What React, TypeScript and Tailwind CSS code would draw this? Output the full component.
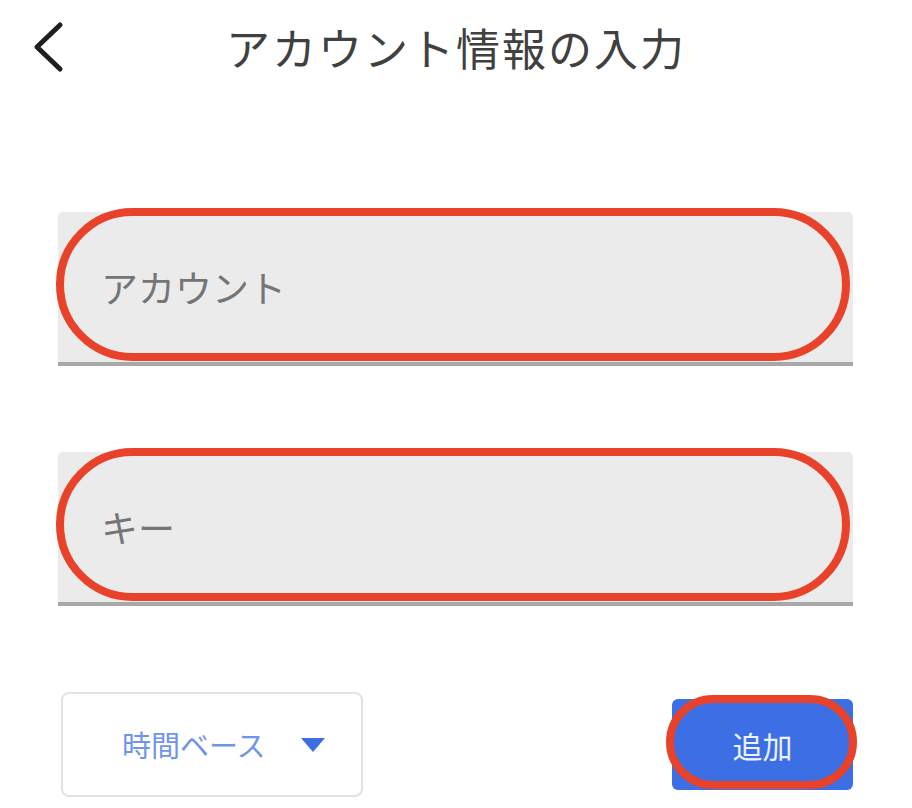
import React from "react";

const FONT = "font-['Noto_Sans_CJK_JP','Noto_Sans',sans-serif]";

function Highlight({ className }: { className: string }) {
  // red annotation ring drawn over a control
  return (
    <div
      className={`pointer-events-none absolute rounded-full border-[8px] border-[#e8432a] ${className}`}
    />
  );
}

function FilledField({ placeholder }: { placeholder: string }) {
  return (
    <div className="relative">
      <div className="flex h-[154px] items-center rounded-t-[5px] border-b-[4px] border-[#a8a8a8] bg-[#ebebeb] pl-[43px]">
        <span className="text-[37px] leading-none text-[#757575]">
          {placeholder}
        </span>
      </div>
      <Highlight className="-left-[2px] -top-[4px] right-[3px] bottom-[5px]" />
    </div>
  );
}

export default function App() {
  return (
    <div className={`h-[808px] w-[912px] overflow-hidden bg-white ${FONT}`}>
      {/* Header */}
      <header className="grid h-[94px] grid-cols-[1fr_auto_1fr] items-center">
        <button className="ml-[30px] flex h-[52px] w-[36px] items-center justify-center">
          <svg width="36" height="52" viewBox="0 0 36 52" fill="none">
            <path
              d="M30 4 L7 26 L30 48"
              stroke="#1f1f1f"
              strokeWidth="5"
              strokeLinecap="round"
              strokeLinejoin="round"
            />
          </svg>
        </button>
        <h1 className="text-[44px] font-normal leading-none tracking-[2px] text-[#404040]">
          アカウント情報の入力
        </h1>
        <div />
      </header>

      {/* Form */}
      <main className="px-[58px] pt-[118px] pr-[59px]">
        <div className="flex flex-col gap-[86px]">
          <FilledField placeholder="アカウント" />
          <FilledField placeholder="キー" />
        </div>

        <div className="mt-[86px] flex items-center justify-between pl-[3px]">
          <button className="flex h-[105px] w-[302px] items-center rounded-[8px] border-2 border-[#e2e2e2] bg-white pl-[59px]">
            <span className="text-[29px] leading-none text-[#6f95ea]">
              時間ベース
            </span>
            <svg className="ml-[35px]" width="24" height="14" viewBox="0 0 24 14">
              <path d="M0 0 H24 L12 14 Z" fill="#3b6fe3" />
            </svg>
          </button>

          <div className="relative">
            <button className="flex h-[91px] w-[181px] items-center justify-center rounded-[6px] bg-[#3b6fe3]">
              <span className="text-[30px] leading-none text-[#eef2fd]">
                追加
              </span>
            </button>
            <Highlight className="-left-[6px] -right-[4px] -top-[4px] bottom-[1px]" />
          </div>
        </div>
      </main>
    </div>
  );
}
